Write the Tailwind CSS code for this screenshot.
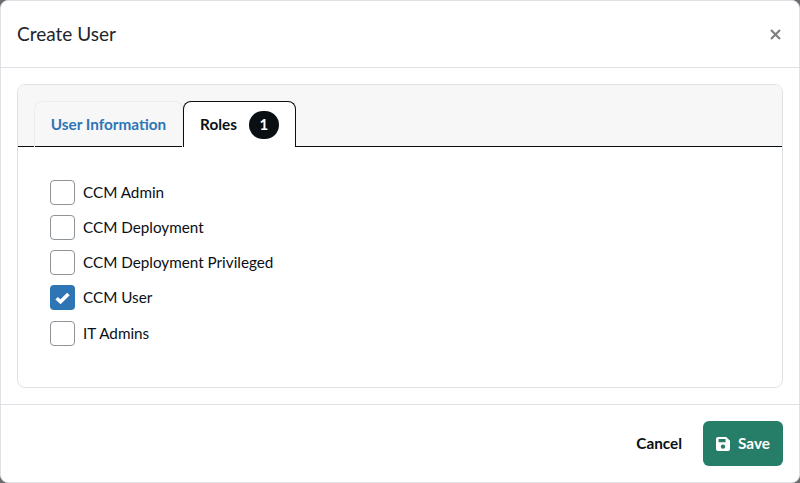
<!DOCTYPE html>
<html><head><meta charset="utf-8">
<script src="https://cdn.jsdelivr.net/npm/@tailwindcss/browser@4"></script>
</head>
<body class="m-0 bg-[#6b6c6e]">
<div class="w-[800px] h-[483px] bg-white border border-[#dee2e6] rounded-lg flex flex-col font-['Lato','Noto_Sans',sans-serif] text-[#0a0f14] overflow-hidden box-border">
  <div class="h-[66px] shrink-0 flex items-center justify-between pl-4 pr-[17px] border-b border-[#dee2e6] box-content">
    <h5 class="text-[19px] leading-none text-[#212529] font-normal pb-[2px]">Create User</h5>
    <svg class="w-[11px] h-[11px] mr-[1px]" viewBox="0 0 11 11"><path d="M1 1l9 9M10 1l-9 9" stroke="#7f7f7f" stroke-width="2.2" fill="none"/></svg>
  </div>
  <div class="flex-1 px-4 pt-4 pb-4">
    <div class="h-[304px] border border-[#dee2e6] rounded-lg overflow-hidden flex flex-col">
      <div class="h-[62px] shrink-0 bg-[#f7f7f7] border-b border-[#0a0f14] pl-4 pt-4 flex items-start box-border">
        <div class="h-[46px] w-[149px] shrink-0 border border-b-0 border-[#ededed] rounded-t-lg flex items-center justify-center text-[15.3px] font-bold text-[#2e75b6]">User Information</div>
        <div class="h-[46px] w-[113px] shrink-0 bg-white border border-b-0 border-[#0a0f14] rounded-t-lg flex items-center justify-center gap-[12px] text-[15.3px] font-bold relative">
          <span>Roles</span>
          <span class="w-[30px] h-[28px] rounded-full bg-[#0a0f14] text-white flex items-center justify-center text-[15px] font-bold">1</span>
        </div>
      </div>
      <div class="pl-8 pt-[33px] flex flex-col gap-[10px] text-[15.25px]">
        <label class="flex items-center gap-2 h-[25px]"><span class="w-[25px] h-[25px] border border-[#8f9499] rounded-[4px] bg-white"></span>CCM Admin</label>
        <label class="flex items-center gap-2 h-[25px]"><span class="w-[25px] h-[25px] border border-[#8f9499] rounded-[4px] bg-white"></span>CCM Deployment</label>
        <label class="flex items-center gap-2 h-[25px]"><span class="w-[25px] h-[25px] border border-[#8f9499] rounded-[4px] bg-white"></span>CCM Deployment Privileged</label>
        <label class="flex items-center gap-2 h-[25px]"><span class="w-[25px] h-[25px] rounded-[4px] bg-[#2e75b6] flex items-center justify-center"><svg class="w-[15px] h-[12px]" viewBox="0 0 15 12"><path d="M1.6 6.2l3.9 3.6L13.4 2" stroke="#fff" stroke-width="3.6" fill="none"/></svg></span>CCM User</label>
        <label class="flex items-center gap-2 h-[25px] mt-[1px]"><span class="w-[25px] h-[25px] border border-[#8f9499] rounded-[4px] bg-white"></span>IT Admins</label>
      </div>
    </div>
  </div>
  <div class="h-[78px] shrink-0 border-t border-[#dee2e6] flex items-start justify-end pt-4 pr-4 gap-[21px] box-border">
    <span class="h-[45px] flex items-center text-[15.3px] font-bold">Cancel</span>
    <span class="w-[80px] h-[45px] rounded-md bg-[#277e68] text-white flex items-center justify-center gap-2 text-[15.3px] font-bold">
      <svg class="w-[14px] h-[14px]" viewBox="0 0 14 14"><path fill="#fff" fill-rule="evenodd" d="M2 0h8.2L14 3.8V12a2 2 0 0 1-2 2H2a2 2 0 0 1-2-2V2a2 2 0 0 1 2-2zM2.6 2v3.2h7V2zM7 7.4a2.2 2.2 0 1 0 0 4.4 2.2 2.2 0 0 0 0-4.4z"/></svg>
      Save</span>
  </div>
</div>
</body></html>
